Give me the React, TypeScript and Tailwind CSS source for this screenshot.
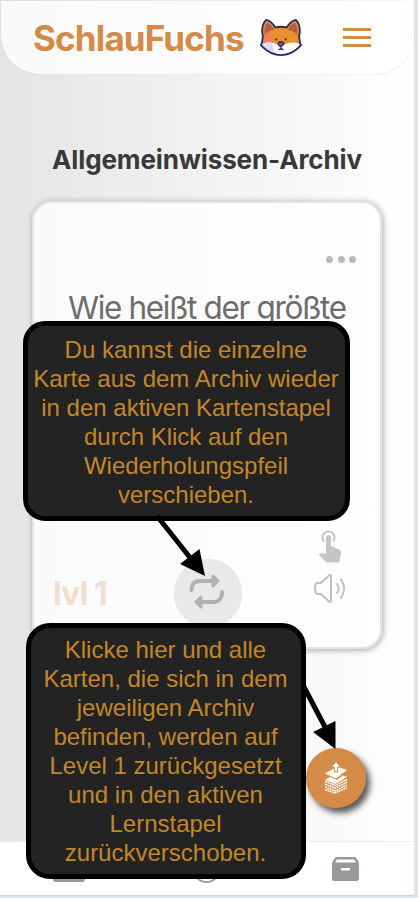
import type { ReactNode } from "react";

function FoxLogo() {
  return (
    <svg width="42" height="39" viewBox="0 0 44 40" className="shrink-0">
      <path d="M3 19C1.500 12 3 5 6.500 1.500C11 2.500 14 6 16 9.500Q22 8 28 9.500C30 6 33 2.500 37.500 1.500C41 5 42.500 12 41 19L42 26L43 28L41 30C36 35 29 38.500 22 38.500S8 35 3 30L1 28L2 26Z" fill="#e9902f" />
      <path d="M5 17C4.500 11 5 7 7.500 4.500C11 6 13.500 9 15 12C11 12.500 7.500 14 5 17ZM39 17C39.500 11 39 7 36.500 4.500C33 6 30.500 9 29 12C33 12.500 36.500 14 39 17Z" fill="#b75b48" />
      <path d="M3 23C5 17 9 14 13.500 13.500L13 26L3 27Z" fill="#f47b5b" />
      <path d="M2 27C7 24 15 25 19 28L22 25.500L25 28C29 25 37 24 42 27L40 30C35 34 29 37.500 22 37.500S9 34 3.500 29.500Z" fill="#fff" />
      <path d="M2.500 27C7 24.700 10 25 12.500 25.500C13 30 15 34.500 18 37.200C12 36 7 33 3.500 29.500Z" fill="#d7dcfb" />
      <path d="M3 19C1.500 12 3 5 6.500 1.500C11 2.500 14 6 16 9.500Q22 8 28 9.500C30 6 33 2.500 37.500 1.500C41 5 42.500 12 41 19L42 26L43 28L41 30C36 35 29 38.500 22 38.500S8 35 3 30L1 28L2 26Z" fill="none" stroke="#232a68" strokeWidth="1.900" strokeLinejoin="round" />
      <g fill="#5b3143">
        <circle cx="17" cy="22" r="1.200" />
        <circle cx="27" cy="22" r="1.200" />
      </g>
      <path d="M19 25.500Q22 23.500 25 25.500Q24.500 28.500 22 29T19 25.500Z" fill="#a94e4c" stroke="#232a68" strokeWidth="1.400" />
      <path d="M22 29V31.500M19.500 32.500Q21 32.800 22 31.500Q23 32.800 24.500 32.500" fill="none" stroke="#232a68" strokeWidth="1.400" />
    </svg>
  );
}

function Bubble({ place, lines }: { place: string; lines: string[] }) {
  return (
    <div className={`absolute flex flex-col items-center border-[5px] border-black bg-[#232323] font-['Liberation_Sans',Arial,sans-serif] text-[24px] leading-[29px] text-[#c3872a] ${place}`}>
      {lines.map((line) => (
        <span key={line} className="whitespace-nowrap">{line}</span>
      ))}
    </div>
  );
}

function RepeatButton({ children }: { children: ReactNode }) {
  return (
    <div className="flex h-[68px] w-[68px] items-center justify-center rounded-full bg-[#e9e9e9] shadow-[0_1px_2px_rgba(0,0,0,0.06)]">
      {children}
    </div>
  );
}

export default function App() {
  return (
    <div className="relative h-[898px] w-[418px] overflow-hidden bg-[#dbe6eb] font-[Inter,sans-serif]">
      <div className="flex h-[896px] w-[414px] flex-col border-b border-[#cdd1d3] bg-linear-to-r from-[#e5e5e5] to-white">
        <header className="mt-px ml-px flex h-[73px] w-[413px] shrink-0 items-center rounded-b-[38px] bg-white/80 pl-[32px] shadow-[0_0_1px_rgba(0,0,0,0.3)]">
          <span className="mt-px w-[227px] text-[35px] font-bold tracking-[-0.85px] whitespace-nowrap text-[#d48b48]">SchlauFuchs</span>
          <FoxLogo />
          <div className="ml-[41px] flex flex-col gap-[5px]">
            <i className="h-[3px] w-7 bg-[#d48b48]" />
            <i className="h-[3px] w-7 bg-[#d48b48]" />
            <i className="h-[3px] w-7 bg-[#d48b48]" />
          </div>
        </header>

        <main className="flex min-h-0 flex-1 flex-col">
          <h1 className="mt-[68px] ml-[52px] text-[26px] leading-9 font-bold tracking-[-0.12px] whitespace-nowrap text-[#393939]">Allgemeinwissen-Archiv</h1>
          <section className="mt-[23px] ml-8 flex h-[448px] w-[350px] flex-col rounded-[20px] border-2 border-[#e4e4e4] bg-white/80 shadow-[1px_1px_6px_rgba(0,0,0,0.35)]">
            <div className="mt-[53px] mr-[24px] flex justify-end gap-[4.500px]">
              <i className="size-[7px] rounded-full bg-[#b9b9b9]" />
              <i className="size-[7px] rounded-full bg-[#b9b9b9]" />
              <i className="size-[7px] rounded-full bg-[#b9b9b9]" />
            </div>
            <p className="mt-[25px] ml-[34px] text-[31.500px] leading-10 tracking-[-1.35px] whitespace-nowrap text-[#6d6d6d]">Wie heißt der größte</p>
            <div className="mt-auto mb-[20px] flex h-[102px] items-end">
              <span className="mb-[13px] ml-[19px] w-[121px] text-[32px] leading-10 font-bold tracking-[-0.9px] text-[#f1dfcf]">lvl 1</span>
              <RepeatButton>
                <svg width="36" height="36" viewBox="0 0 36 36" fill="none" stroke="#b0b2af" strokeWidth="4" strokeLinecap="round" className="-mt-1 -ml-0.5">
                  <path d="M2.500 17C2.500 11 6 8 11 8H25M33 19C33 26 29 29 25 29H11" />
                  <path d="M24 3L29 8L24 13ZM12 24L7 29L12 34Z" fill="#b0b2af" strokeWidth="3" strokeLinejoin="round" />
                </svg>
              </RepeatButton>
              <div className="mt-[5px] ml-[71px] flex flex-col items-center gap-[10px] self-start">
                <svg width="24" height="34" viewBox="0 0 24 34">
                  <path d="M6 11.500A6 6 0 1 1 15 11.500" fill="none" stroke="#c5c5c5" strokeWidth="2" />
                  <path d="M8 7.500Q8 5 10.500 5T13 7.500V16L21 19.500Q23.500 20.500 23 23L21.500 31Q21 32.500 19.500 32.500H10Q8.500 32.500 7.500 31.500L1 25Q1.500 23 4 23L8 24Z" fill="#c5c5c5" />
                </svg>
                <svg width="34" height="30" viewBox="0 0 34 30" fill="none" stroke="#c0c0c0" strokeWidth="2" strokeLinecap="round" strokeLinejoin="round">
                  <path d="M4 9H8L16 1.500Q18 0 18 2V27Q18 29 16 27.500L8 20H4Q2 19 2 14.500T4 9M24 10Q27.500 14.500 24 19M28 5.500Q34 14.500 28 24" />
                </svg>
              </div>
            </div>
          </section>
        </main>

        <footer className="flex h-[54px] shrink-0 items-start border-t border-[#ededed] bg-white pt-[14px] pl-[53px]">
          <div className="h-[26px] w-8 rounded-[3px] bg-[#979a97]" />
          <div className="ml-[108px] size-[27px] rounded-full border-2 border-[#979a97]" />
          <svg className="mt-px ml-[112px]" width="27" height="25" viewBox="0 0 27 25">
            <path fillRule="evenodd" d="M4 0H23Q25 1 27 6V22Q27 24 25 24H2Q0 24 0 22V6Q2 1 4 0ZM5 2.500L3 5.500H24L22 2.500ZM9 11V13.500H18V11Z" fill="#979a97" />
          </svg>
        </footer>
      </div>

      <button className="absolute top-[748px] left-[306px] flex size-[60px] items-center justify-center rounded-full bg-[#d48b48] shadow-[4px_5px_6px_rgba(0,0,0,0.65)]">
        <svg width="24" height="32" viewBox="0 0 24 32" fill="#fff">
          <path d="M10 6.500L1 11.500L12 16.500L23 8L14 5Z" />
          <path d="M12 -0.500L7.500 5H10.300V10H13.700V5H16.500Z" stroke="#d48b48" strokeWidth="1" />
          <path d="M1 18L6 15L13 18L19 13.500L23 15L11 22Z" />
          <path d="M1 19.500L11 23.500L23 17.500M1 22.200L11 26.200L23 20.200M1 24.900L11 28.900L23 22.900M1 27.600L11 31L23 25.600" fill="none" stroke="#fff" strokeWidth="1.500" strokeDasharray="2 0.500" />
        </svg>
      </button>

      <Bubble
        place="top-[321px] left-[23px] h-[200px] w-[327px] rounded-[22px] pt-[9px] pr-[1px]"
        lines={["Du kannst die einzelne", "Karte aus dem Archiv wieder", "in den aktiven Kartenstapel", "durch Klick auf den", "Wiederholungspfeil", "verschieben."]}
      />
      <Bubble
        place="top-[623px] left-[26px] h-[256px] w-[280px] rounded-[24px] pt-[7px] pr-[1px]"
        lines={["Klicke hier und alle", "Karten, die sich in dem", "jeweiligen Archiv", "befinden, werden auf", "Level 1 zurückgesetzt", "und in den aktiven", "Lernstapel", "zurückverschoben."]}
      />
      <svg className="pointer-events-none absolute inset-0" width="418" height="898" viewBox="0 0 418 898">
        <path d="M157 516L192 560M304 687L325 727" stroke="#000" strokeWidth="5" />
        <path d="M205 576L180 564L199.500 549ZM335.500 749L313 732L335.500 721Z" />
      </svg>
    </div>
  );
}
